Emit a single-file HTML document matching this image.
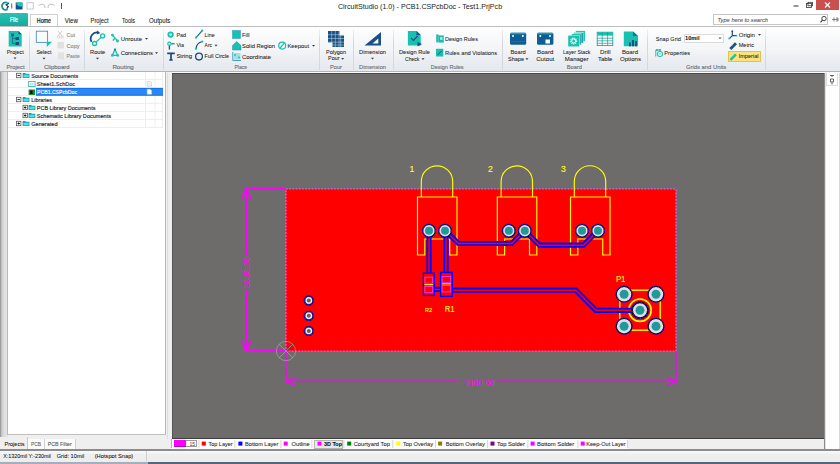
<!DOCTYPE html>
<html><head><meta charset="utf-8">
<style>
*{margin:0;padding:0;box-sizing:border-box}
html,body{width:840px;height:464px;overflow:hidden;background:#f0f0f0;font-family:"Liberation Sans",sans-serif}
.a{position:absolute}
.sep{position:absolute;top:29px;width:1px;height:41px;background:linear-gradient(#f4f4f4,#d6d8db 30%,#d6d8db)}
svg text{font-family:"Liberation Sans",sans-serif}
</style></head><body>
<div class="a" style="left:0;top:0;width:840px;height:26px;background:#fff"></div>
<div class="a" style="left:816px;top:0;width:23px;height:9.5px;background:#c9504c"></div>
<div class="a" style="left:0;top:13px;width:27.5px;height:12.8px;background:linear-gradient(#2cc0b4,#12ab9f);border-radius:1px 1px 0 0"></div>
<div class="a" style="left:30px;top:14px;width:28px;height:13px;background:#fff;border:1px solid #cfcfcf;border-bottom:none"></div>
<div class="a" style="left:713px;top:14px;width:115px;height:11px;background:#fff;border:1px solid #c6c6c6"></div>
<div class="a" style="left:0;top:25.5px;width:840px;height:46.5px;background:linear-gradient(#fefefe,#f3f5f7 50%,#e8ebef 85%,#e6e9ed);border-top:1px solid #bdbdbd;border-bottom:1px solid #b4b4b4"></div>
<div class="a" style="left:0;top:72px;width:840px;height:1px;background:#fafafa"></div>
<div class="sep" style="left:29px"></div><div class="sep" style="left:84px"></div><div class="sep" style="left:163px"></div><div class="sep" style="left:319px"></div><div class="sep" style="left:353px"></div><div class="sep" style="left:393px"></div><div class="sep" style="left:502px"></div><div class="sep" style="left:647px"></div><div class="sep" style="left:765px"></div>
<div class="a" style="left:683.5px;top:33.5px;width:40px;height:9.5px;background:#fff;border:1px solid #dcdcdc"></div>
<div class="a" style="left:728px;top:51px;width:32.5px;height:10.5px;background:#fbe27a;border:1px solid #e8c04a"></div>
<!-- left panel -->
<div class="a" style="left:0;top:72px;width:172px;height:377px;background:#efefef"></div>
<div class="a" style="left:167px;top:73px;width:1px;height:366px;background:#dedede"></div>
<div class="a" style="left:0;top:72px;width:8px;height:365px;background:linear-gradient(90deg,#8e8e8e,#cfcfcf 25%,#e0e0e0 60%,#e6e6e6)"></div>
<div class="a" style="left:7px;top:72px;width:159px;height:363px;background:#fff;border:1px solid #b8b8b8;border-top:none;border-bottom:1.5px solid #c0c0c0"></div>
<div class="a" style="left:0;top:437px;width:28px;height:12px;background:#efefef;border-right:1px solid #c8c8c8"></div>
<div class="a" style="left:28px;top:439px;width:16.5px;height:9.5px;background:#fafafa;border-right:1px solid #d0d0d0"></div>
<div class="a" style="left:44.5px;top:439px;width:31px;height:9.5px;background:#fafafa;border-right:1px solid #d0d0d0"></div>
<!-- canvas -->
<div class="a" style="left:172px;top:73px;width:653px;height:366px;background:#6e6c6b;border-top:1px solid #4a4a4a;border-left:1px solid #555"></div>
<div class="a" style="left:172px;top:438.5px;width:653px;height:10px;background:#efefef"></div>
<div class="a" style="left:172px;top:438.5px;width:455.5px;height:10px;background:#fcfcfc"></div>
<div class="a" style="left:172px;top:438px;width:653px;height:1px;background:#3e3e3e"></div>
<div class="a" style="left:173.5px;top:439.8px;width:23.5px;height:7.5px;background:#fff;border:1px solid #9a9a9a"></div>
<div class="a" style="left:173.8px;top:440px;width:12.5px;height:6.8px;background:#ff00ff;border-bottom:1px solid #b000b0"></div>
<div class="a" style="left:171px;top:439px;width:1px;height:9px;background:#b0b0b0"></div>
<div class="a" style="left:313.8px;top:439.5px;width:29.5px;height:9px;background:#e9e9e9;border:1px solid #b5b5b5"></div>
<div class="a" style="left:825px;top:73px;width:15px;height:376px;background:#fff;border-left:1px solid #e2e2e2"></div>
<div class="a" style="left:824px;top:73px;width:1px;height:376px;background:#8a8a8a"></div>
<div class="a" style="left:826px;top:73px;width:12px;height:13px;border:1px solid #dcdcdc;border-top:none"></div>
<svg class="a" style="left:826px;top:73px" width="12" height="14"><path d="M4 2.5 L8 2.5 M6 2.5 L6 4 M4.5 6 L7.5 6 L7.5 9 L4.5 9Z M6 9 L6 11.5" stroke="#444" stroke-width="0.8" fill="none"/></svg>
<div class="a" style="left:838.5px;top:73px;width:1.5px;height:376px;background:#d8d8d8"></div>
<!-- bottom -->
<div class="a" style="left:0;top:449px;width:840px;height:1.5px;background:#8c8c8c"></div>
<div class="a" style="left:0;top:450.5px;width:840px;height:11.5px;background:linear-gradient(#fafafa,#efefef 30%,#eeedec)"></div>
<div class="a" style="left:146px;top:451px;width:1px;height:10px;background:#d0d0d0"></div>
<div class="a" style="left:0;top:462px;width:148px;height:2px;background:#a6aebd"></div>
<div class="a" style="left:148px;top:462px;width:692px;height:2px;background:#566579"></div>
<svg class="a" style="left:0;top:0" width="840" height="464" viewBox="0 0 840 464">

<!-- title bar icons -->
<path d="M6.8 2.6 A3.7 3.7 0 1 0 7.6 9.3" fill="none" stroke="#16968f" stroke-width="1.8"/>
<path d="M8.9 3 L6.2 4.9 L8.2 6.6 L6.8 8.6" fill="none" stroke="#1a3a80" stroke-width="1.3"/>
<path d="M6.3 2.4 L8.6 2.4" stroke="#20c0a0" stroke-width="1"/>
<rect x="11.3" y="3.5" width="0.9" height="5" fill="#555"/>
<rect x="15.7" y="2.5" width="6.8" height="7" fill="#14508c"/>
<path d="M16.5 2.5 L21 2.5 L22.5 4 L22.5 6.5 L19 6.5 L16.5 4.5Z" fill="#17c8b8"/>
<rect x="27" y="2.7" width="6.3" height="6.3" fill="none" stroke="#c9c9c9" stroke-width="1"/>
<path d="M38.5 5.5 L42 4 Q45 4.5 45 8" fill="none" stroke="#c8c8c8" stroke-width="1.2"/>
<path d="M54.5 5.5 L51 4 Q48 4.5 48 8" fill="none" stroke="#c8c8c8" stroke-width="1.2"/>
<rect x="61" y="3" width="0.9" height="6" fill="#444"/>
<!-- window buttons -->
<rect x="793.5" y="5.5" width="5" height="1" fill="#333"/>
<rect x="806.5" y="3.5" width="5" height="4" fill="none" stroke="#333" stroke-width="0.8"/>
<rect x="808" y="2.3" width="4.5" height="3.5" fill="none" stroke="#333" stroke-width="0.8"/>
<path d="M825 2.5 L830 7.5 M830 2.5 L825 7.5" stroke="#fff" stroke-width="1.1"/>
<!-- search icon -->
<circle cx="824" cy="18.6" r="2.2" fill="none" stroke="#333" stroke-width="0.9"/>
<path d="M822.5 20.2 L820.5 22.3" stroke="#333" stroke-width="1.1"/>
<path d="M832 19.5 L838 19.5 M834 17.5 L834 21.5 M836 18 L838 18 L838 21 L836 21" fill="none" stroke="#555" stroke-width="0.7"/>

<!-- Project icon -->
<path d="M8.7 31 L18.5 31 L21.7 34.3 L21.7 46.6 L8.7 46.6 Z" fill="#17c0b0"/>
<path d="M18.5 31 L21.7 34.3 L18.5 34.3Z" fill="#1b4f87"/>
<rect x="11" y="33.5" width="3" height="3" fill="#1b4f87" opacity="0.8"/>
<rect x="15.5" y="37" width="3.5" height="3" fill="#1b4f87"/>
<rect x="15.5" y="42" width="3.5" height="3" fill="#1b4f87"/>
<path d="M12.5 36.5 L12.5 43.5 L15.5 43.5 M12.5 38.5 L15.5 38.5" fill="none" stroke="#1b4f87" stroke-width="0.8" opacity="0.8"/>
<!-- Select icon -->
<rect x="36.3" y="31.2" width="11.3" height="11.2" fill="none" stroke="#4f8ccc" stroke-width="0.9"/>
<path d="M46.8 41.8 L52 41.8 L46.8 47 Z" fill="#17c0b0"/>
<!-- cut copy paste greyed -->
<path d="M58 31 L62 36 M62 31 L58 36" stroke="#d0d0d0" stroke-width="1"/>
<circle cx="58.5" cy="37" r="1.3" fill="none" stroke="#d0d0d0" stroke-width="0.8"/>
<circle cx="62" cy="37" r="1.3" fill="none" stroke="#d0d0d0" stroke-width="0.8"/>
<rect x="57.5" y="42" width="6.5" height="6.5" fill="#e0e0e0"/>
<rect x="58" y="52.5" width="6" height="7" fill="#e2e2e2"/>
<!-- Route icon -->
<path d="M91.5 41.8 A6.3 6.3 0 0 1 98.2 32.6" fill="none" stroke="#154a80" stroke-width="1.7"/>
<path d="M97.2 30.6 L100.2 32.9 L96.8 34.6Z" fill="#154a80"/>
<path d="M94.6 43.5 L102.6 35.9" stroke="#17c0b0" stroke-width="1.2"/>
<circle cx="94.6" cy="43.5" r="2" fill="#fff" stroke="#17c0b0" stroke-width="1.4"/>
<circle cx="102.6" cy="35.9" r="2" fill="#fff" stroke="#17c0b0" stroke-width="1.4"/>
<!-- Unroute icon -->
<path d="M112.2 34.9 L117.7 41.1 M112.8 40.5 L115.5 37.8" stroke="#17c0b0" stroke-width="1.4"/>
<circle cx="112.4" cy="35.1" r="1.4" fill="#17c0b0"/>
<circle cx="117.5" cy="41" r="1.4" fill="#17c0b0"/>
<!-- Connections icon -->
<path d="M115 49.6 L112.3 55.4 L117.7 55.4 Z" fill="none" stroke="#17c0b0" stroke-width="1.3"/>
<circle cx="115" cy="49.6" r="1.1" fill="#1a8a9a"/>
<circle cx="112.3" cy="55.4" r="1.3" fill="#17c0b0"/>
<circle cx="117.7" cy="55.4" r="1.3" fill="#17c0b0"/>
<!-- Pad -->
<circle cx="170.6" cy="34.6" r="2.3" fill="#bfeee8" stroke="#17c0b0" stroke-width="1.7"/>
<!-- Via -->
<circle cx="169.4" cy="43.8" r="1.6" fill="#fff" stroke="#17c0b0" stroke-width="1.2"/>
<path d="M171.4 43.8 L174.6 43.8" stroke="#1b4f87" stroke-width="1.1"/>
<path d="M169.4 45.8 L169.4 49.6" stroke="#1b4f87" stroke-width="1.3"/>
<!-- String T -->
<path d="M167.2 53.4 L174.8 53.4 M171 53.4 L171 60 M169.3 60 L172.7 60" stroke="#154a80" stroke-width="1.7"/>
<!-- Line -->
<path d="M196 37.7 L202 30.8" stroke="#1a6a9a" stroke-width="1.2"/>
<circle cx="196" cy="37.7" r="1.1" fill="#17c0b0"/><circle cx="202.2" cy="30.6" r="1.1" fill="#17c0b0"/>
<!-- Arc -->
<path d="M196 48.8 Q196.5 42.8 202.3 41.5" fill="none" stroke="#154a80" stroke-width="1.2"/>
<circle cx="196" cy="48.8" r="1.1" fill="#17c0b0"/><circle cx="202.3" cy="41.5" r="1.1" fill="#17c0b0"/>
<!-- Full circle -->
<circle cx="199" cy="56.6" r="3.4" fill="none" stroke="#154a80" stroke-width="1.3"/>
<!-- Fill -->
<rect x="232.5" y="30.5" width="8" height="8" fill="#17c0b0" stroke="#3a9fd0" stroke-width="0.6"/>
<!-- Solid region -->
<path d="M232.5 45.5 L236.7 41.5 L241 45.5 L241 50 L232.5 50Z" fill="#17c0b0" stroke="#3a8fc0" stroke-width="0.6"/>
<!-- Coordinate -->
<path d="M232.8 52 L232.8 60.5 L241 60.5" fill="none" stroke="#3a8fc0" stroke-width="0.9"/>
<circle cx="235" cy="55" r="0.9" fill="#17c0b0"/><circle cx="239" cy="57.5" r="0.9" fill="#17c0b0"/>
<rect x="234" y="53" width="6.5" height="6.5" fill="#17c0b0" opacity="0.35"/>
<!-- Keepout -->
<circle cx="282.2" cy="45.6" r="3.5" fill="none" stroke="#17c0b0" stroke-width="1.2"/>
<path d="M280 48 L284.5 43.2" stroke="#17c0b0" stroke-width="1.1"/>
<!-- Polygon pour -->
<g fill="#1b4f87">
<rect x="328" y="31" width="11.5" height="11.5"/>
<rect x="332.5" y="35.5" width="11.5" height="11.5"/>
</g>
<g stroke="#d8f4f4" stroke-width="0.5" opacity="0.9">
<path d="M331.7 31 L331.7 47 M335.3 31 L335.3 47 M339 31 L339 47 M340.7 35.5 L340.7 47 M328 34.7 L344 34.7 M328 38.5 L344 38.5 M328 42.2 L344 42.2 M332.5 45 L344 45"/>
</g>
<!-- Dimension triangle -->
<path d="M381 32 L381 45.5 L364.5 45.5 Z" fill="#1b4f87"/>
<path d="M378.3 38.5 L378.3 43.5 L372.5 43.5 Z" fill="#f5f7f9"/>
<!-- DRC -->
<path d="M407.9 31 L416.5 31 L420.7 35 L420.7 45.5 L407.9 45.5 Z" fill="#17c0b0"/>
<path d="M416.5 31 L420.7 35 L416.5 35Z" fill="#1b4f87"/>
<path d="M411 38 L413.5 40.5 L417.5 36" fill="none" stroke="#1b4f87" stroke-width="1.2"/>
<path d="M417.5 42 L422 44 L417.5 46.5Z" fill="#1b4f87"/>
<!-- Design rules small -->
<rect x="436.2" y="34.4" width="2.2" height="8" fill="#17c0b0"/>
<rect x="439" y="35.4" width="4.8" height="7.2" fill="#17c0b0"/>
<rect x="440" y="37" width="2.6" height="3" fill="#8ae8e0"/>
<path d="M438.6 35 L438.6 42.4" stroke="#1a7a9a" stroke-width="0.5"/>
<!-- Rules and violations -->
<rect x="436" y="48.8" width="7.3" height="7.7" fill="#17c0b0"/>
<path d="M437.8 54.8 L441.8 50.8" fill="none" stroke="#1b4f87" stroke-width="1"/>
<!-- Board shape -->
<rect x="510" y="32.8" width="16.2" height="12" rx="1.5" fill="#0f5d94"/>
<rect x="510.5" y="32.8" width="15.2" height="1.5" fill="#1aa3a8"/>
<circle cx="513" cy="36" r="1" fill="#fff"/><circle cx="522.8" cy="36" r="1" fill="#fff"/>
<rect x="511" y="41" width="14" height="0.6" fill="#2b78b0"/>
<!-- Board cutout -->
<rect x="537" y="32.8" width="16.4" height="12" rx="1.5" fill="#0f5d94"/>
<rect x="537.5" y="32.8" width="15.4" height="1.5" fill="#1aa3a8"/>
<circle cx="540.3" cy="36" r="1" fill="#fff"/><circle cx="550" cy="36" r="1" fill="#fff"/>
<rect x="545.5" y="39.5" width="4.5" height="4" fill="#fff"/>
<!-- Layer stack -->
<rect x="575.6" y="30.8" width="9.6" height="10.5" fill="#17c0b0" stroke="#fff" stroke-width="0.5"/>
<rect x="573.6" y="32.3" width="9.6" height="10.8" fill="#17c0b0" stroke="#fff" stroke-width="0.5"/>
<rect x="571.4" y="33.8" width="9.6" height="11" fill="#17c0b0" stroke="#fff" stroke-width="0.5"/>
<path d="M582.8 33 L582.8 43.3 M580.8 34.5 L580.8 44.9" stroke="#1a6a8a" stroke-width="0.5"/>
<rect x="568" y="35.3" width="11.5" height="11.5" fill="#17c0b0" stroke="#fff" stroke-width="0.4"/>
<circle cx="573.7" cy="41" r="2.9" fill="none" stroke="#fff" stroke-width="1.3" stroke-dasharray="1.1 0.8"/>
<circle cx="573.7" cy="41" r="1.9" fill="none" stroke="#fff" stroke-width="0.9"/>
<!-- Drill table -->
<rect x="597.2" y="32.2" width="15.6" height="13.4" fill="#fff" stroke="#179a9a" stroke-width="0.8"/>
<rect x="597.2" y="32.2" width="15.6" height="3.4" fill="#17c0b0"/>
<path d="M597 38.2 L613 38.2 M597 40.8 L613 40.8 M597 43.3 L613 43.3 M602.2 32 L602.2 45.8 M607.6 32 L607.6 45.8" stroke="#179a9a" stroke-width="0.7"/>
<!-- Board options -->
<path d="M623.8 31.5 L633 31.5 L638 36 L638 46.3 L623.8 46.3 Z" fill="#17c0b0"/>
<path d="M633 31.5 L638 36 L633 36Z" fill="#1b4f87" opacity="0.7"/>
<rect x="629" y="42.5" width="2" height="3.8" fill="#1b4f87"/>
<rect x="632" y="40" width="2" height="6.3" fill="#1b4f87"/>
<rect x="635" y="41" width="2" height="5.3" fill="#1b4f87"/>
<!-- Properties -->
<path d="M655.8 50 L655.8 56.5 M655.8 50 L661 50" stroke="#17c0b0" stroke-width="1"/>
<path d="M657 49 L657 51 M660 49 L660 51" stroke="#1b4f87" stroke-width="0.7"/>
<circle cx="660" cy="54" r="2.5" fill="#fff" stroke="#17c0b0" stroke-width="1.1"/>
<circle cx="660" cy="54" r="0.8" fill="#17c0b0"/>
<!-- Origin -->
<path d="M732.3 31 L732.3 35.6 L736.5 35.6 M732.3 35.6 L729.3 38.6" fill="none" stroke="#1b4f87" stroke-width="1.2"/>
<circle cx="732.3" cy="31.2" r="0.9" fill="#1b4f87"/><circle cx="736.5" cy="35.6" r="0.9" fill="#17c0b0"/><circle cx="729.3" cy="38.6" r="1" fill="#17c0b0"/>
<!-- Metric ruler -->
<path d="M729.3 48 L735 42.3 L737 44.3 L731.3 50 Z" fill="#1b4f87"/>
<path d="M731.5 44.8 L732.3 45.6 M733 43.3 L733.8 44.1" stroke="#fff" stroke-width="0.4"/>
<!-- Imperial ruler -->
<path d="M729.5 59 L735 53.5 L736.8 55.3 L731.3 60.8 Z" fill="#17c0b0"/>
<path d="M731.8 56.6 L732.4 57.2 M733.4 55 L734 55.6" stroke="#fff" stroke-width="0.4"/>

<g><path d="M8 79.5 L163 79.5" stroke="#efefef" stroke-width="1"/><path d="M8 87.5 L163 87.5" stroke="#efefef" stroke-width="1"/><path d="M8 95.5 L163 95.5" stroke="#efefef" stroke-width="1"/><path d="M8 103.5 L163 103.5" stroke="#efefef" stroke-width="1"/><path d="M8 111.5 L163 111.5" stroke="#efefef" stroke-width="1"/><path d="M8 119.5 L163 119.5" stroke="#efefef" stroke-width="1"/><path d="M8 127.5 L163 127.5" stroke="#efefef" stroke-width="1"/><path d="M145.5 72 L145.5 128 M155 72 L155 128 M162.5 72 L162.5 128" stroke="#efefef" stroke-width="1"/><rect x="36" y="88" width="127" height="7.6" fill="#2a88f2"/><path d="M36 88.4 L163 88.4 M36 95.2 L163 95.2" stroke="#0c6cf0" stroke-width="0.8"/><rect x="16.5" y="73.3" width="4.4" height="4.4" fill="#fff" stroke="#5a5a5a" stroke-width="0.8"/><path d="M17.5 75.5 L19.9 75.5" stroke="#111" stroke-width="0.9"/><path d="M22.7 73.1 L25.2 73.1 L25.9 73.8 L29.4 73.8 L29.4 77.9 L22.7 77.9 Z" fill="#139c98"/><rect x="23.5" y="74.6" width="5.2" height="2.8" fill="#52dcea"/><rect x="28.6" y="81.5" width="6.5" height="5" fill="#fff" stroke="#3bb8b0" stroke-width="0.9"/><path d="M30.1 84 L33.6 84" stroke="#3bb8b0" stroke-width="0.7"/><rect x="28.6" y="89.5" width="6.5" height="5.5" fill="#1f8a2a"/><rect x="30.1" y="90.5" width="2.5" height="3.5" fill="#111"/><rect x="16.5" y="97.3" width="4.4" height="4.4" fill="#fff" stroke="#5a5a5a" stroke-width="0.8"/><path d="M17.5 99.5 L19.9 99.5" stroke="#111" stroke-width="0.9"/><path d="M22.7 97.1 L25.2 97.1 L25.9 97.8 L29.4 97.8 L29.4 101.9 L22.7 101.9 Z" fill="#139c98"/><rect x="23.5" y="98.6" width="5.2" height="2.8" fill="#52dcea"/><rect x="23.0" y="105.3" width="4.4" height="4.4" fill="#fff" stroke="#5a5a5a" stroke-width="0.8"/><path d="M24.0 107.5 L26.4 107.5" stroke="#111" stroke-width="0.9"/><path d="M25.2 106.3 L25.2 108.7" stroke="#111" stroke-width="0.9"/><path d="M28.6 105.1 L31.1 105.1 L31.8 105.8 L35.300000000000004 105.8 L35.300000000000004 109.9 L28.6 109.9 Z" fill="#139c98"/><rect x="29.400000000000002" y="106.6" width="5.2" height="2.8" fill="#52dcea"/><rect x="23.0" y="113.3" width="4.4" height="4.4" fill="#fff" stroke="#5a5a5a" stroke-width="0.8"/><path d="M24.0 115.5 L26.4 115.5" stroke="#111" stroke-width="0.9"/><path d="M25.2 114.3 L25.2 116.7" stroke="#111" stroke-width="0.9"/><path d="M28.6 113.1 L31.1 113.1 L31.8 113.8 L35.300000000000004 113.8 L35.300000000000004 117.9 L28.6 117.9 Z" fill="#139c98"/><rect x="29.400000000000002" y="114.6" width="5.2" height="2.8" fill="#52dcea"/><rect x="16.5" y="121.3" width="4.4" height="4.4" fill="#fff" stroke="#5a5a5a" stroke-width="0.8"/><path d="M17.5 123.5 L19.9 123.5" stroke="#111" stroke-width="0.9"/><path d="M18.7 122.3 L18.7 124.7" stroke="#111" stroke-width="0.9"/><path d="M22.7 121.1 L25.2 121.1 L25.9 121.8 L29.4 121.8 L29.4 125.9 L22.7 125.9 Z" fill="#139c98"/><rect x="23.5" y="122.6" width="5.2" height="2.8" fill="#52dcea"/><path d="M147.2 81.3 L150.2 81.3 L151.5 82.6 L151.5 86.2 L147.2 86.2Z" fill="#f2f2f2" stroke="#bcbcbc" stroke-width="0.5"/><path d="M147.2 89.3 L150.2 89.3 L151.5 90.6 L151.5 94.2 L147.2 94.2Z" fill="#fff8e6" stroke="#e6d6b0" stroke-width="0.5"/></g>
<svg x="172" y="73" width="653" height="365" viewBox="172 73 653 365" overflow="hidden"><rect x="286" y="189" width="390" height="162" fill="#ff0000"/><rect x="286" y="189" width="390" height="162" fill="none" stroke="#ff55ff" stroke-width="1.2" stroke-dasharray="1.8 1.4"/><g stroke="#ff00ff" stroke-width="1.4" fill="none"><path d="M244.5 188.6 L286 188.6 M244.5 350.8 L286 350.8" stroke-width="1.8"/><path d="M246.2 189 L246.2 255.5 M246.2 289.5 L246.2 350.5" stroke-width="1.9"/><path d="M241.4 198.8 L246.2 189.6 L251 198.8 M241.4 341 L246.2 350 L251 341" stroke-width="1.6"/><path d="M286 351 L286 383.6 M676 351 L676 383.6"/><path d="M286 381.3 L459.8 381.3 M496.5 381.3 L676 381.3"/><path d="M295 377.6 L286.5 381.3 L295 385 M667 377.6 L675.5 381.3 L667 385"/></g><text x="0" y="0" transform="translate(249.4 272.3) rotate(-90)" font-size="8.8" fill="#ff00ff" stroke="#ff00ff" stroke-width="0.05" text-anchor="middle" textLength="31.5" lengthAdjust="spacingAndGlyphs">1000.00</text><text x="463.9" y="386.2" font-size="9.3" fill="#ff00ff" stroke="#ff00ff" stroke-width="0.05" textLength="30" lengthAdjust="spacingAndGlyphs">2400.00</text><g stroke="#b0b0b0" stroke-width="0.7" fill="none" opacity="0.85"><circle cx="286" cy="351" r="9.6"/><path d="M279.2 344.2 L286 351 L292.8 357.8 M279.2 357.8 L286 351"/></g><path d="M286 351 L292.8 344.2" stroke="#3ac0b0" stroke-width="0.8"/><path d="M421.3 197 L421.3 181.5 A15.7 15.7 0 0 1 452.7 181.5 L452.7 197" fill="none" stroke="#ffff00" stroke-width="1.15"/><path d="M417.5 197 L457.0 197 L457.0 255 L449.7 255 L449.7 239 L424.8 239 L424.8 255 L417.5 255 Z" fill="none" stroke="#ffff00" stroke-width="1.15"/><text x="412" y="171.8" font-size="8.6" fill="#ffff00" stroke="#ffff00" stroke-width="0.15" text-anchor="middle">1</text><path d="M501.1 197 L501.1 181.5 A15.7 15.7 0 0 1 532.5 181.5 L532.5 197" fill="none" stroke="#ffff00" stroke-width="1.15"/><path d="M497.3 197 L536.8 197 L536.8 255 L529.5 255 L529.5 239 L504.6 239 L504.6 255 L497.3 255 Z" fill="none" stroke="#ffff00" stroke-width="1.15"/><text x="490.4" y="171.8" font-size="8.6" fill="#ffff00" stroke="#ffff00" stroke-width="0.15" text-anchor="middle">2</text><path d="M574.3 197 L574.3 181.5 A15.7 15.7 0 0 1 605.7 181.5 L605.7 197" fill="none" stroke="#ffff00" stroke-width="1.15"/><path d="M570.5 197 L610.0 197 L610.0 255 L602.7 255 L602.7 239 L577.8 239 L577.8 255 L570.5 255 Z" fill="none" stroke="#ffff00" stroke-width="1.15"/><text x="563.4" y="171.8" font-size="8.6" fill="#ffff00" stroke="#ffff00" stroke-width="0.15" text-anchor="middle">3</text><rect x="619.8" y="290.2" width="40.4" height="40" fill="none" stroke="#ffff00" stroke-width="1.4"/><circle cx="640" cy="310.2" r="11.2" fill="none" stroke="#ffff00" stroke-width="1.6"/><path d="M429 231 L429 276" fill="none" stroke="#0000ff" stroke-width="5.2" stroke-linejoin="miter"/><path d="M429 231 L429 276" fill="none" stroke="#ff0000" stroke-width="1.5"/><path d="M446 231 L446 276" fill="none" stroke="#0000ff" stroke-width="5.2" stroke-linejoin="miter"/><path d="M446 231 L446 276" fill="none" stroke="#ff0000" stroke-width="1.5"/><path d="M445.4 230.8 L458.6 243.5 L511.6 243.5 L524.6 230.7" fill="none" stroke="#0000ff" stroke-width="5.2" stroke-linejoin="miter"/><path d="M445.4 230.8 L458.6 243.5 L511.6 243.5 L524.6 230.7" fill="none" stroke="#ff0000" stroke-width="1.5"/><path d="M524.6 230.7 L539.4 245.2 L583.5 245.2 L597.8 230.7" fill="none" stroke="#0000ff" stroke-width="5.2" stroke-linejoin="miter"/><path d="M524.6 230.7 L539.4 245.2 L583.5 245.2 L597.8 230.7" fill="none" stroke="#ff0000" stroke-width="1.5"/><path d="M434 289.4 L441 289.4" fill="none" stroke="#0000ff" stroke-width="5.2" stroke-linejoin="miter"/><path d="M434 289.4 L441 289.4" fill="none" stroke="#ff0000" stroke-width="1.5"/><path d="M452 290.2 L575.8 290.2 L595.8 310.3 L640 310.3" fill="none" stroke="#0000ff" stroke-width="5.2" stroke-linejoin="miter"/><path d="M452 290.2 L575.8 290.2 L595.8 310.3 L640 310.3" fill="none" stroke="#ff0000" stroke-width="1.5"/><rect x="423.4" y="273.2" width="10.8" height="22.2" fill="#ff0000" stroke="#0000ff" stroke-width="1.4"/><rect x="424.9" y="277.2" width="7.800000000000001" height="6" fill="#ff0000" stroke="#ff33ff" stroke-width="0.9"/><rect x="424.9" y="286.4" width="7.800000000000001" height="6.3" fill="#ff0000" stroke="#ff33ff" stroke-width="0.9"/><path d="M424.4 284.59999999999997 L433.2 284.59999999999997" stroke="#ffff00" stroke-width="1.1"/><path d="M424.4 283.59999999999997 L433.2 283.59999999999997" stroke="#4040ff" stroke-width="0.6"/><rect x="440.6" y="272.4" width="11.6" height="24" fill="#ff0000" stroke="#0000ff" stroke-width="1.4"/><rect x="442.1" y="276.4" width="8.6" height="6" fill="#ff0000" stroke="#ff33ff" stroke-width="0.9"/><rect x="442.1" y="285.59999999999997" width="8.6" height="6.3" fill="#ff0000" stroke="#ff33ff" stroke-width="0.9"/><path d="M441.6 283.79999999999995 L451.20000000000005 283.79999999999995" stroke="#ffff00" stroke-width="1.1"/><path d="M441.6 282.79999999999995 L451.20000000000005 282.79999999999995" stroke="#4040ff" stroke-width="0.6"/><text x="425" y="312" font-size="4.6" fill="#ffff00" stroke="#ffff00" stroke-width="0.1" textLength="7" lengthAdjust="spacingAndGlyphs">R2</text><text x="444.8" y="311.9" font-size="9.4" fill="#ffff00" stroke="#ffff00" stroke-width="0.1" textLength="9.7" lengthAdjust="spacingAndGlyphs">R1</text><text x="615.9" y="281.6" font-size="8.3" fill="#ffff00" stroke="#ffff00" stroke-width="0.12" textLength="9.6" lengthAdjust="spacingAndGlyphs">P1</text><circle cx="429.0" cy="230.7" r="6.35" fill="#e4dde2" stroke="#0a0a28" stroke-width="1.3"/><circle cx="429.0" cy="230.7" r="6.35" fill="none" stroke="#1a1aff" stroke-width="1.3" stroke-dasharray="1.2 2.6"/><circle cx="429.0" cy="230.7" r="4.0" fill="#1f9a9a"/><circle cx="445.0" cy="230.7" r="6.35" fill="#e4dde2" stroke="#0a0a28" stroke-width="1.3"/><circle cx="445.0" cy="230.7" r="6.35" fill="none" stroke="#1a1aff" stroke-width="1.3" stroke-dasharray="1.2 2.6"/><circle cx="445.0" cy="230.7" r="4.0" fill="#1f9a9a"/><circle cx="508.8" cy="230.7" r="6.35" fill="#e4dde2" stroke="#0a0a28" stroke-width="1.3"/><circle cx="508.8" cy="230.7" r="6.35" fill="none" stroke="#1a1aff" stroke-width="1.3" stroke-dasharray="1.2 2.6"/><circle cx="508.8" cy="230.7" r="4.0" fill="#1f9a9a"/><circle cx="524.8" cy="230.7" r="6.35" fill="#e4dde2" stroke="#0a0a28" stroke-width="1.3"/><circle cx="524.8" cy="230.7" r="6.35" fill="none" stroke="#1a1aff" stroke-width="1.3" stroke-dasharray="1.2 2.6"/><circle cx="524.8" cy="230.7" r="4.0" fill="#1f9a9a"/><circle cx="582.0" cy="230.7" r="6.35" fill="#e4dde2" stroke="#0a0a28" stroke-width="1.3"/><circle cx="582.0" cy="230.7" r="6.35" fill="none" stroke="#1a1aff" stroke-width="1.3" stroke-dasharray="1.2 2.6"/><circle cx="582.0" cy="230.7" r="4.0" fill="#1f9a9a"/><circle cx="598.0" cy="230.7" r="6.35" fill="#e4dde2" stroke="#0a0a28" stroke-width="1.3"/><circle cx="598.0" cy="230.7" r="6.35" fill="none" stroke="#1a1aff" stroke-width="1.3" stroke-dasharray="1.2 2.6"/><circle cx="598.0" cy="230.7" r="4.0" fill="#1f9a9a"/><circle cx="624.1" cy="294.3" r="7.85" fill="#e4dde2" stroke="#0a0a28" stroke-width="1.3"/><circle cx="624.1" cy="294.3" r="7.85" fill="none" stroke="#1a1aff" stroke-width="1.3" stroke-dasharray="1.2 2.6"/><circle cx="624.1" cy="294.3" r="4.5" fill="#1f9a9a"/><circle cx="656" cy="294.3" r="7.85" fill="#e4dde2" stroke="#0a0a28" stroke-width="1.3"/><circle cx="656" cy="294.3" r="7.85" fill="none" stroke="#1a1aff" stroke-width="1.3" stroke-dasharray="1.2 2.6"/><circle cx="656" cy="294.3" r="4.5" fill="#1f9a9a"/><circle cx="624.1" cy="326.2" r="7.85" fill="#e4dde2" stroke="#0a0a28" stroke-width="1.3"/><circle cx="624.1" cy="326.2" r="7.85" fill="none" stroke="#1a1aff" stroke-width="1.3" stroke-dasharray="1.2 2.6"/><circle cx="624.1" cy="326.2" r="4.5" fill="#1f9a9a"/><circle cx="656" cy="326.2" r="7.85" fill="#e4dde2" stroke="#0a0a28" stroke-width="1.3"/><circle cx="656" cy="326.2" r="7.85" fill="none" stroke="#1a1aff" stroke-width="1.3" stroke-dasharray="1.2 2.6"/><circle cx="656" cy="326.2" r="4.5" fill="#1f9a9a"/><circle cx="640" cy="310.2" r="7.95" fill="#e4dde2" stroke="#0a0a28" stroke-width="1.9"/><circle cx="640" cy="310.2" r="7.95" fill="none" stroke="#1a1aff" stroke-width="1.9" stroke-dasharray="1.2 2.6"/><circle cx="640" cy="310.2" r="4.5" fill="#1f9a9a"/><circle cx="308.8" cy="300.5" r="4.3" fill="#f4f0f0" stroke="#10106a" stroke-width="1.7"/><circle cx="308.8" cy="300.5" r="4.3" fill="none" stroke="#2020ff" stroke-width="1.7" stroke-dasharray="1.2 2"/><circle cx="308.8" cy="300.5" r="2" fill="#7a5a40"/><circle cx="308.8" cy="315.8" r="4.3" fill="#f4f0f0" stroke="#10106a" stroke-width="1.7"/><circle cx="308.8" cy="315.8" r="4.3" fill="none" stroke="#2020ff" stroke-width="1.7" stroke-dasharray="1.2 2"/><circle cx="308.8" cy="315.8" r="2" fill="#7a5a40"/><circle cx="308.8" cy="330.9" r="4.3" fill="#f4f0f0" stroke="#10106a" stroke-width="1.7"/><circle cx="308.8" cy="330.9" r="4.3" fill="none" stroke="#2020ff" stroke-width="1.7" stroke-dasharray="1.2 2"/><circle cx="308.8" cy="330.9" r="2" fill="#7a5a40"/></svg>
<rect x="201.8" y="441.6" width="4" height="4" fill="#ff0000"/><rect x="234.5" y="440" width="0.8" height="8" fill="#cdcdcd"/><rect x="238.4" y="441.6" width="4" height="4" fill="#0000ff"/><rect x="280.5" y="440" width="0.8" height="8" fill="#cdcdcd"/><rect x="283.7" y="441.6" width="4" height="4" fill="#ff00ff"/><rect x="311.5" y="440" width="0.8" height="8" fill="#cdcdcd"/><rect x="317.5" y="441.6" width="4" height="4" fill="#ff00ff"/><rect x="343.5" y="440" width="0.8" height="8" fill="#cdcdcd"/><rect x="347.2" y="441.6" width="4" height="4" fill="#008000"/><rect x="392.4" y="440" width="0.8" height="8" fill="#cdcdcd"/><rect x="396.2" y="441.6" width="4" height="4" fill="#ffff00"/><rect x="435.2" y="440" width="0.8" height="8" fill="#cdcdcd"/><rect x="438.1" y="441.6" width="4" height="4" fill="#808000"/><rect x="487" y="440" width="0.8" height="8" fill="#cdcdcd"/><rect x="490.5" y="441.6" width="4" height="4" fill="#800080"/><rect x="527.5" y="440" width="0.8" height="8" fill="#cdcdcd"/><rect x="530.6" y="441.6" width="4" height="4" fill="#ff00ff"/><rect x="577.5" y="440" width="0.8" height="8" fill="#cdcdcd"/><rect x="580.7" y="441.6" width="4" height="4" fill="#ff00ff"/><rect x="627" y="440" width="0.8" height="8" fill="#cdcdcd"/><rect x="198.5" y="440" width="0.8" height="8" fill="#cdcdcd"/>
<text x="337.90" y="8.90" font-size="8.0" fill="#1a1a1a" textLength="164.20" lengthAdjust="spacingAndGlyphs">CircuitStudio (1.0) - PCB1.CSPcbDoc - Test1.PrjPcb</text><text x="10.00" y="21.50" font-size="6.6" fill="#ffffff" stroke="#ffffff" stroke-width="0.2" textLength="8.20" lengthAdjust="spacingAndGlyphs">File</text><text x="36.80" y="22.60" font-size="6.3" fill="#111" stroke="#111" stroke-width="0.2" textLength="14.20" lengthAdjust="spacingAndGlyphs">Home</text><text x="64.70" y="22.60" font-size="6.3" fill="#111" stroke="#111" stroke-width="0.06" textLength="13.20" lengthAdjust="spacingAndGlyphs">View</text><text x="90.60" y="22.60" font-size="6.3" fill="#111" stroke="#111" stroke-width="0.06" textLength="17.90" lengthAdjust="spacingAndGlyphs">Project</text><text x="122.00" y="22.60" font-size="6.3" fill="#111" stroke="#111" stroke-width="0.06" textLength="13.10" lengthAdjust="spacingAndGlyphs">Tools</text><text x="149.00" y="22.60" font-size="6.3" fill="#111" stroke="#111" stroke-width="0.06" textLength="21.40" lengthAdjust="spacingAndGlyphs">Outputs</text><text x="717.50" y="21.60" font-size="6" fill="#5a5a5a" stroke="#5a5a5a" stroke-width="0.1" font-style="italic" textLength="50.50" lengthAdjust="spacingAndGlyphs">Type here to search</text><text x="66.60" y="36.60" font-size="6.1" fill="#8a8a8a" stroke="#8a8a8a" stroke-width="0.12" textLength="8.40" lengthAdjust="spacingAndGlyphs">Cut</text><text x="66.60" y="47.90" font-size="6.1" fill="#8a8a8a" stroke="#8a8a8a" stroke-width="0.12" textLength="12.90" lengthAdjust="spacingAndGlyphs">Copy</text><text x="66.60" y="58.30" font-size="6.1" fill="#8a8a8a" stroke="#8a8a8a" stroke-width="0.12" textLength="13.20" lengthAdjust="spacingAndGlyphs">Paste</text><text x="120.70" y="40.50" font-size="6.1" fill="#1a1a1a" stroke="#1a1a1a" stroke-width="0.06" textLength="21.30" lengthAdjust="spacingAndGlyphs">Unroute</text><text x="120.70" y="54.90" font-size="6.1" fill="#1a1a1a" stroke="#1a1a1a" stroke-width="0.06" textLength="32.30" lengthAdjust="spacingAndGlyphs">Connections</text><text x="176.40" y="36.70" font-size="6.1" fill="#1a1a1a" stroke="#1a1a1a" stroke-width="0.06" textLength="9.60" lengthAdjust="spacingAndGlyphs">Pad</text><text x="176.40" y="47.40" font-size="6.1" fill="#1a1a1a" stroke="#1a1a1a" stroke-width="0.06" textLength="7.60" lengthAdjust="spacingAndGlyphs">Via</text><text x="176.40" y="58.30" font-size="6.1" fill="#1a1a1a" stroke="#1a1a1a" stroke-width="0.06" textLength="15.60" lengthAdjust="spacingAndGlyphs">String</text><text x="204.60" y="36.70" font-size="6.1" fill="#1a1a1a" stroke="#1a1a1a" stroke-width="0.06" textLength="10.00" lengthAdjust="spacingAndGlyphs">Line</text><text x="204.60" y="47.40" font-size="6.1" fill="#1a1a1a" stroke="#1a1a1a" stroke-width="0.06" textLength="7.40" lengthAdjust="spacingAndGlyphs">Arc</text><text x="204.60" y="58.30" font-size="6.1" fill="#1a1a1a" stroke="#1a1a1a" stroke-width="0.06" textLength="24.40" lengthAdjust="spacingAndGlyphs">Full Circle</text><text x="242.00" y="36.70" font-size="6.1" fill="#1a1a1a" stroke="#1a1a1a" stroke-width="0.06" textLength="7.50" lengthAdjust="spacingAndGlyphs">Fill</text><text x="242.00" y="47.70" font-size="6.1" fill="#1a1a1a" stroke="#1a1a1a" stroke-width="0.06" textLength="33.00" lengthAdjust="spacingAndGlyphs">Solid Region</text><text x="242.00" y="58.50" font-size="6.1" fill="#1a1a1a" stroke="#1a1a1a" stroke-width="0.06" textLength="29.00" lengthAdjust="spacingAndGlyphs">Coordinate</text><text x="287.50" y="47.70" font-size="6.1" fill="#1a1a1a" stroke="#1a1a1a" stroke-width="0.06" textLength="21.50" lengthAdjust="spacingAndGlyphs">Keepout</text><text x="445.00" y="41.00" font-size="6.1" fill="#1a1a1a" stroke="#1a1a1a" stroke-width="0.06" textLength="32.90" lengthAdjust="spacingAndGlyphs">Design Rules</text><text x="445.00" y="55.00" font-size="6.1" fill="#1a1a1a" stroke="#1a1a1a" stroke-width="0.06" textLength="52.00" lengthAdjust="spacingAndGlyphs">Rules and Violations</text><text x="655.80" y="40.50" font-size="6.1" fill="#1a1a1a" stroke="#1a1a1a" stroke-width="0.06" textLength="25.10" lengthAdjust="spacingAndGlyphs">Snap Grid</text><text x="685.00" y="40.30" font-size="6" fill="#111" stroke="#111" stroke-width="0.05" font-weight="bold" textLength="14.50" lengthAdjust="spacingAndGlyphs">10mil</text><text x="664.30" y="55.20" font-size="6.1" fill="#1a1a1a" stroke="#1a1a1a" stroke-width="0.06" textLength="25.90" lengthAdjust="spacingAndGlyphs">Properties</text><text x="738.70" y="36.60" font-size="6.1" fill="#1a1a1a" stroke="#1a1a1a" stroke-width="0.06" textLength="16.20" lengthAdjust="spacingAndGlyphs">Origin</text><text x="738.70" y="47.40" font-size="6.1" fill="#1a1a1a" stroke="#1a1a1a" stroke-width="0.06" textLength="15.30" lengthAdjust="spacingAndGlyphs">Metric</text><text x="738.70" y="58.10" font-size="6.1" fill="#1a1a1a" stroke="#1a1a1a" stroke-width="0.06" textLength="19.80" lengthAdjust="spacingAndGlyphs">Imperial</text><text x="6.70" y="53.80" font-size="6.1" fill="#1a1a1a" stroke="#1a1a1a" stroke-width="0.06" textLength="17.20" lengthAdjust="spacingAndGlyphs">Project</text><text x="36.40" y="54.30" font-size="6.1" fill="#1a1a1a" stroke="#1a1a1a" stroke-width="0.06" textLength="15.20" lengthAdjust="spacingAndGlyphs">Select</text><text x="90.00" y="54.30" font-size="6.1" fill="#1a1a1a" stroke="#1a1a1a" stroke-width="0.06" textLength="15.30" lengthAdjust="spacingAndGlyphs">Route</text><text x="326.00" y="54.20" font-size="6.1" fill="#1a1a1a" stroke="#1a1a1a" stroke-width="0.06" textLength="20.00" lengthAdjust="spacingAndGlyphs">Polygon</text><text x="328.00" y="60.20" font-size="6.1" fill="#1a1a1a" stroke="#1a1a1a" stroke-width="0.06" textLength="11.50" lengthAdjust="spacingAndGlyphs">Pour</text><text x="359.00" y="54.20" font-size="6.1" fill="#1a1a1a" stroke="#1a1a1a" stroke-width="0.06" textLength="27.00" lengthAdjust="spacingAndGlyphs">Dimension</text><text x="398.90" y="54.10" font-size="6.1" fill="#1a1a1a" stroke="#1a1a1a" stroke-width="0.06" textLength="31.10" lengthAdjust="spacingAndGlyphs">Design Rule</text><text x="405.00" y="60.60" font-size="6.1" fill="#1a1a1a" stroke="#1a1a1a" stroke-width="0.06" textLength="14.30" lengthAdjust="spacingAndGlyphs">Check</text><text x="510.50" y="53.80" font-size="6.1" fill="#1a1a1a" stroke="#1a1a1a" stroke-width="0.06" textLength="15.20" lengthAdjust="spacingAndGlyphs">Board</text><text x="508.00" y="60.80" font-size="6.1" fill="#1a1a1a" stroke="#1a1a1a" stroke-width="0.06" textLength="16.00" lengthAdjust="spacingAndGlyphs">Shape</text><text x="537.10" y="53.80" font-size="6.1" fill="#1a1a1a" stroke="#1a1a1a" stroke-width="0.06" textLength="16.20" lengthAdjust="spacingAndGlyphs">Board</text><text x="536.20" y="60.80" font-size="6.1" fill="#1a1a1a" stroke="#1a1a1a" stroke-width="0.06" textLength="18.10" lengthAdjust="spacingAndGlyphs">Cutout</text><text x="562.90" y="53.80" font-size="6.1" fill="#1a1a1a" stroke="#1a1a1a" stroke-width="0.06" textLength="27.60" lengthAdjust="spacingAndGlyphs">Layer Stack</text><text x="564.80" y="60.80" font-size="6.1" fill="#1a1a1a" stroke="#1a1a1a" stroke-width="0.06" textLength="23.80" lengthAdjust="spacingAndGlyphs">Manager</text><text x="600.00" y="53.80" font-size="6.1" fill="#1a1a1a" stroke="#1a1a1a" stroke-width="0.06" textLength="10.50" lengthAdjust="spacingAndGlyphs">Drill</text><text x="598.00" y="60.80" font-size="6.1" fill="#1a1a1a" stroke="#1a1a1a" stroke-width="0.06" textLength="14.40" lengthAdjust="spacingAndGlyphs">Table</text><text x="621.90" y="53.80" font-size="6.1" fill="#1a1a1a" stroke="#1a1a1a" stroke-width="0.06" textLength="16.10" lengthAdjust="spacingAndGlyphs">Board</text><text x="620.00" y="60.80" font-size="6.1" fill="#1a1a1a" stroke="#1a1a1a" stroke-width="0.06" textLength="21.00" lengthAdjust="spacingAndGlyphs">Options</text><text x="6.40" y="68.60" font-size="6.1" fill="#6a6f78" stroke="#6a6f78" stroke-width="0.12" textLength="18.20" lengthAdjust="spacingAndGlyphs">Project</text><text x="43.90" y="68.60" font-size="6.1" fill="#6a6f78" stroke="#6a6f78" stroke-width="0.12" textLength="25.70" lengthAdjust="spacingAndGlyphs">Clipboard</text><text x="112.40" y="68.60" font-size="6.1" fill="#6a6f78" stroke="#6a6f78" stroke-width="0.12" textLength="21.40" lengthAdjust="spacingAndGlyphs">Routing</text><text x="234.50" y="68.60" font-size="6.1" fill="#6a6f78" stroke="#6a6f78" stroke-width="0.12" textLength="12.50" lengthAdjust="spacingAndGlyphs">Place</text><text x="330.00" y="68.60" font-size="6.1" fill="#6a6f78" stroke="#6a6f78" stroke-width="0.12" textLength="12.00" lengthAdjust="spacingAndGlyphs">Pour</text><text x="359.00" y="68.60" font-size="6.1" fill="#6a6f78" stroke="#6a6f78" stroke-width="0.12" textLength="27.00" lengthAdjust="spacingAndGlyphs">Dimension</text><text x="430.70" y="68.60" font-size="6.1" fill="#6a6f78" stroke="#6a6f78" stroke-width="0.12" textLength="32.90" lengthAdjust="spacingAndGlyphs">Design Rules</text><text x="566.70" y="68.60" font-size="6.1" fill="#6a6f78" stroke="#6a6f78" stroke-width="0.12" textLength="15.20" lengthAdjust="spacingAndGlyphs">Board</text><text x="686.00" y="68.60" font-size="6.1" fill="#6a6f78" stroke="#6a6f78" stroke-width="0.12" textLength="40.30" lengthAdjust="spacingAndGlyphs">Grids and Units</text><path d="M13.5 57.55 L16.5 57.55 L15 59.199999999999996Z" fill="#3a3a3a"/><path d="M42.5 57.85 L45.5 57.85 L44 59.5Z" fill="#3a3a3a"/><path d="M96.0 57.85 L99.0 57.85 L97.5 59.5Z" fill="#3a3a3a"/><path d="M341.2 58.05 L344.2 58.05 L342.7 59.699999999999996Z" fill="#3a3a3a"/><path d="M371.0 57.85 L374.0 57.85 L372.5 59.5Z" fill="#3a3a3a"/><path d="M421.5 58.25 L424.5 58.25 L423 59.9Z" fill="#3a3a3a"/><path d="M525.5 58.25 L528.5 58.25 L527 59.9Z" fill="#3a3a3a"/><path d="M145.0 38.05 L148.0 38.05 L146.5 39.699999999999996Z" fill="#3a3a3a"/><path d="M155.0 52.25 L158.0 52.25 L156.5 53.9Z" fill="#3a3a3a"/><path d="M214.5 44.75 L217.5 44.75 L216 46.4Z" fill="#3a3a3a"/><path d="M312.0 45.05 L315.0 45.05 L313.5 46.699999999999996Z" fill="#3a3a3a"/><path d="M758.0 34.05 L761.0 34.05 L759.5 35.699999999999996Z" fill="#3a3a3a"/><path d="M718.5 37.45 L721.5 37.45 L720 39.1Z" fill="#3a3a3a"/><text x="31.20" y="78.00" font-size="6" fill="#1e1e1e" stroke="#1e1e1e" stroke-width="0.16" textLength="47.10" lengthAdjust="spacingAndGlyphs">Source Documents</text><text x="36.80" y="86.00" font-size="6" fill="#1e1e1e" stroke="#1e1e1e" stroke-width="0.16" textLength="38.20" lengthAdjust="spacingAndGlyphs">Sheet1.SchDoc</text><text x="37.10" y="93.90" font-size="6" fill="#ffffff" stroke="#ffffff" stroke-width="0.16" textLength="39.90" lengthAdjust="spacingAndGlyphs">PCB1.CSPcbDoc</text><text x="31.20" y="102.00" font-size="6" fill="#1e1e1e" stroke="#1e1e1e" stroke-width="0.16" textLength="20.80" lengthAdjust="spacingAndGlyphs">Libraries</text><text x="36.80" y="110.00" font-size="6" fill="#1e1e1e" stroke="#1e1e1e" stroke-width="0.16" textLength="58.60" lengthAdjust="spacingAndGlyphs">PCB Library Documents</text><text x="36.80" y="118.00" font-size="6" fill="#1e1e1e" stroke="#1e1e1e" stroke-width="0.16" textLength="74.20" lengthAdjust="spacingAndGlyphs">Schematic Library Documents</text><text x="31.20" y="125.90" font-size="6" fill="#1e1e1e" stroke="#1e1e1e" stroke-width="0.16" textLength="26.40" lengthAdjust="spacingAndGlyphs">Generated</text><text x="4.50" y="445.60" font-size="6" fill="#111" stroke="#111" stroke-width="0.06" textLength="20.00" lengthAdjust="spacingAndGlyphs">Projects</text><text x="31.00" y="445.60" font-size="6" fill="#666" stroke="#666" stroke-width="0.1" textLength="10.00" lengthAdjust="spacingAndGlyphs">PCB</text><text x="47.70" y="445.60" font-size="6" fill="#4a4a4a" stroke="#4a4a4a" stroke-width="0.06" textLength="24.00" lengthAdjust="spacingAndGlyphs">PCB Filter</text><text x="3.30" y="458.40" font-size="6" fill="#111" stroke="#111" stroke-width="0.06" textLength="47.50" lengthAdjust="spacingAndGlyphs">X:1320mil Y:-230mil</text><text x="56.70" y="458.40" font-size="6" fill="#111" stroke="#111" stroke-width="0.06" textLength="27.50" lengthAdjust="spacingAndGlyphs">Grid: 10mil</text><text x="94.70" y="458.40" font-size="6" fill="#111" stroke="#111" stroke-width="0.06" textLength="38.60" lengthAdjust="spacingAndGlyphs">(Hotspot Snap)</text><text x="208.50" y="445.70" font-size="6" fill="#1a1a1a" stroke="#1a1a1a" stroke-width="0.06" textLength="24.10" lengthAdjust="spacingAndGlyphs">Top Layer</text><text x="245.10" y="445.70" font-size="6" fill="#1a1a1a" stroke="#1a1a1a" stroke-width="0.06" textLength="33.20" lengthAdjust="spacingAndGlyphs">Bottom Layer</text><text x="291.40" y="445.70" font-size="6" fill="#1a1a1a" stroke="#1a1a1a" stroke-width="0.06" textLength="18.40" lengthAdjust="spacingAndGlyphs">Outline</text><text x="353.70" y="445.70" font-size="6" fill="#1a1a1a" stroke="#1a1a1a" stroke-width="0.06" textLength="36.20" lengthAdjust="spacingAndGlyphs">Courtyard Top</text><text x="402.90" y="445.70" font-size="6" fill="#1a1a1a" stroke="#1a1a1a" stroke-width="0.06" textLength="30.10" lengthAdjust="spacingAndGlyphs">Top Overlay</text><text x="445.70" y="445.70" font-size="6" fill="#1a1a1a" stroke="#1a1a1a" stroke-width="0.06" textLength="39.10" lengthAdjust="spacingAndGlyphs">Bottom Overlay</text><text x="497.10" y="445.70" font-size="6" fill="#1a1a1a" stroke="#1a1a1a" stroke-width="0.06" textLength="27.90" lengthAdjust="spacingAndGlyphs">Top Solder</text><text x="537.00" y="445.70" font-size="6" fill="#1a1a1a" stroke="#1a1a1a" stroke-width="0.06" textLength="37.30" lengthAdjust="spacingAndGlyphs">Bottom Solder</text><text x="586.30" y="445.70" font-size="6" fill="#1a1a1a" stroke="#1a1a1a" stroke-width="0.06" textLength="39.40" lengthAdjust="spacingAndGlyphs">Keep-Out Layer</text><text x="324.00" y="445.70" font-size="6" fill="#111" stroke="#111" stroke-width="0.1" font-weight="bold" textLength="18.00" lengthAdjust="spacingAndGlyphs">3D Top</text><text x="189.50" y="445.60" font-size="5.8" fill="#444" stroke="#444" stroke-width="0.05" textLength="5.50" lengthAdjust="spacingAndGlyphs">15</text>
</svg>
</body></html>
